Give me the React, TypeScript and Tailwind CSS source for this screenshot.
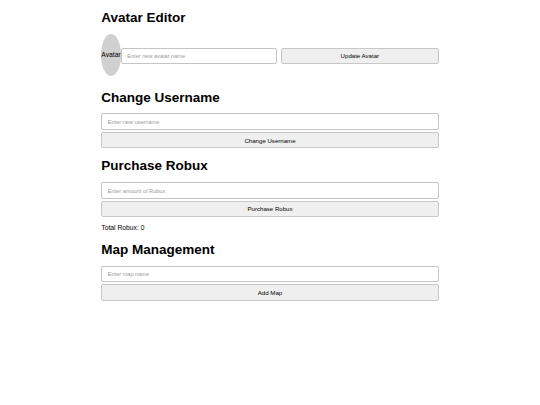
import { useState } from 'react'

function Field({ placeholder, value, onChange }: { placeholder: string; value: string; onChange: (v: string) => void }) {
  return (
    <input
      value={value}
      onChange={(e) => onChange(e.target.value)}
      placeholder={placeholder}
      className="block h-[16.5px] w-full min-w-0 rounded-[2px] border border-[#c4c4c4] bg-white px-[5.5px] text-[5.6px] text-black outline-none placeholder:text-[#9a9a9a]"
    />
  )
}

function Btn({ label, onClick, className = '' }: { label: string; onClick?: () => void; className?: string }) {
  return (
    <button
      onClick={onClick}
      className={`block h-[16.5px] rounded-[2px] border border-[#c8c8c8] bg-[#efefef] text-[6.1px] text-black ${className}`}
    >
      {label}
    </button>
  )
}

export default function App() {
  const [avatar, setAvatar] = useState('')
  const [username, setUsername] = useState('')
  const [amount, setAmount] = useState('')
  const [robux, setRobux] = useState(0)
  const [mapName, setMapName] = useState('')

  return (
    <div className="min-h-[405px] bg-white font-['Liberation_Sans',Arial,sans-serif] text-black">
      <div className="mx-auto flex w-[337.5px] flex-col">
        {/* Avatar */}
        <h2 className="mt-[9.6px] text-[13.5px] font-bold leading-[15.5px]">Avatar Editor</h2>
        <div className="mt-[9.4px] flex h-[42px] items-center">
          <div className="flex h-[42px] w-[19.5px] shrink-0 items-center justify-center rounded-[50%] bg-[#d0d0d0]">
            <span className="whitespace-nowrap text-[6.75px] leading-none">Avatar</span>
          </div>
          <div className="mt-[1px] min-w-0 flex-1">
            <Field placeholder="Enter new avatar name" value={avatar} onChange={setAvatar} />
          </div>
          <Btn label="Update Avatar" className="ml-[4.5px] mt-[1px] min-w-0 flex-1" />
        </div>

        {/* Username */}
        <h2 className="mt-[13.1px] text-[13.5px] font-bold leading-[15.5px]">Change Username</h2>
        <div className="mt-[8.4px] flex flex-col gap-[2px]">
          <Field placeholder="Enter new username" value={username} onChange={setUsername} />
          <Btn label="Change Username" className="w-full" />
        </div>

        {/* Robux */}
        <h2 className="mt-[9.7px] text-[13.5px] font-bold leading-[15.5px]">Purchase Robux</h2>
        <div className="mt-[8.6px] flex flex-col gap-[2px]">
          <Field placeholder="Enter amount of Robux" value={amount} onChange={setAmount} />
          <Btn
            label="Purchase Robux"
            className="w-full"
            onClick={() => {
              const n = parseInt(amount, 10)
              if (!isNaN(n)) setRobux(robux + n)
              setAmount('')
            }}
          />
        </div>
        <p className="mt-[6.8px] text-[6.75px] leading-[7.75px]">Total Robux: {robux}</p>

        {/* Maps */}
        <h2 className="mt-[9.75px] text-[13.5px] font-bold leading-[15.5px]">Map Management</h2>
        <div className="mt-[8.6px] flex flex-col gap-[2px]">
          <Field placeholder="Enter map name" value={mapName} onChange={setMapName} />
          <Btn label="Add Map" className="w-full" />
        </div>
      </div>
    </div>
  )
}
